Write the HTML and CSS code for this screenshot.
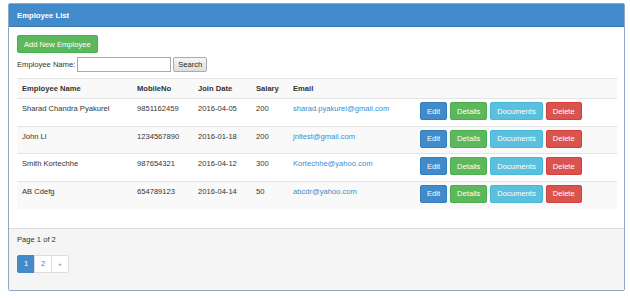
FILE: index.html
```html
<!DOCTYPE html>
<html>

<head>
  <meta charset="UTF-8">
  <title>Employee List</title>
  <link rel="stylesheet" href="styles.css">
</head>

<body>
  <div class="panel">
    <div class="panel-heading">Employee List</div>
    <div class="panel-body">
      <button class="btn btn-success add">Add New Employee</button>
      <div class="search">
        <label for="name">Employee Name:</label>
        <input id="name" type="text" />
        <button class="search-btn">Search</button>
      </div>
      <table class="grid">
        <colgroup>
          <col style="width:115px">
          <col style="width:61px">
          <col style="width:58px">
          <col style="width:37px">
          <col style="width:127px">
          <col>
        </colgroup>
        <tbody>
          <tr>
            <th>Employee Name</th>
            <th>MobileNo</th>
            <th>Join Date</th>
            <th>Salary</th>
            <th>Email</th>
            <th></th>
          </tr>
          <tr>
            <td>Sharad Chandra Pyakurel</td>
            <td>9851162459</td>
            <td>2016-04-05</td>
            <td>200</td>
            <td><a href="#">sharad.pyakurel@gmail.com</a></td>
            <td class="actions">
              <button class="btn btn-primary">Edit</button>
              <button class="btn btn-success">Details</button>
              <button class="btn btn-info">Documents</button>
              <button class="btn btn-danger">Delete</button>
            </td>
          </tr>
          <tr>
            <td>John Li</td>
            <td>1234567890</td>
            <td>2016-01-18</td>
            <td>200</td>
            <td><a href="#">jnltest@gmail.com</a></td>
            <td class="actions">
              <button class="btn btn-primary">Edit</button>
              <button class="btn btn-success">Details</button>
              <button class="btn btn-info">Documents</button>
              <button class="btn btn-danger">Delete</button>
            </td>
          </tr>
          <tr>
            <td>Smith Kortechhe</td>
            <td>987654321</td>
            <td>2016-04-12</td>
            <td>300</td>
            <td><a href="#">Kortechhe@yahoo.com</a></td>
            <td class="actions">
              <button class="btn btn-primary">Edit</button>
              <button class="btn btn-success">Details</button>
              <button class="btn btn-info">Documents</button>
              <button class="btn btn-danger">Delete</button>
            </td>
          </tr>
          <tr>
            <td>AB Cdefg</td>
            <td>654789123</td>
            <td>2016-04-14</td>
            <td>50</td>
            <td><a href="#">abcdr@yahoo.com</a></td>
            <td class="actions">
              <button class="btn btn-primary">Edit</button>
              <button class="btn btn-success">Details</button>
              <button class="btn btn-info">Documents</button>
              <button class="btn btn-danger">Delete</button>
            </td>
          </tr>
        </tbody>
      </table>
    </div>
    <div class="panel-footer">
      <p>Page 1 of 2</p>
      <ul class="pagination">
        <li class="active"><a href="#">1</a></li>
        <li><a href="#">2</a></li>
        <li><a href="#">&raquo;</a></li>
      </ul>
    </div>
  </div>
</body>

</html>
```

FILE: styles.css
```css
* {
  padding: 0;
  margin: 0;
  box-sizing: border-box;
}

body {
  background: #fff;
  font-family: "Liberation Sans", Arial, sans-serif;
  font-size: 7.6px;
  line-height: 11px;
  color: #333;
}

.panel {
  margin: 3px 5px 0 8px;
  height: 288px;
  border: 1px solid #8fa8c2;
  border-radius: 2px;
  display: flex;
  flex-direction: column;
  box-shadow: 0 1px 1px rgba(0, 0, 0, .05);
}

.panel-heading {
  height: 23px;
  background: #428bca;
  color: #fff;
  font-weight: bold;
  font-size: 7.7px;
  padding: 6px 8px;
  border-bottom: 1px solid #3a7bb4;
}

.panel-body {
  padding: 8px 8px 0 8px;
  height: 201px;
  display: flex;
  flex-direction: column;
  align-items: flex-start;
}

.btn {
  height: 18px;
  padding: 0 6px;
  font-family: inherit;
  font-size: 7.6px;
  color: #fff;
  border: 1px solid transparent;
  border-radius: 2px;
}

.btn-primary {
  background: #428bca;
  border-color: #357ebd;
}

.btn-success {
  background: #5cb85c;
  border-color: #4cae4c;
}

.btn-info {
  background: #5bc0de;
  border-color: #46b8da;
}

.btn-danger {
  background: #d9534f;
  border-color: #d43f3a;
}

.search {
  margin-top: 4px;
  display: flex;
  align-items: center;
  gap: 2px;
}

.search input {
  width: 94px;
  height: 15px;
  border: 1px solid #a9a9a9;
  outline: none;
}

.search-btn {
  height: 15px;
  padding: 0 4px;
  font-family: inherit;
  font-size: 7.6px;
  color: #222;
  background: linear-gradient(#f6f6f6, #dedede);
  border: 1px solid #aaa;
  border-radius: 2px;
}

.grid {
  margin-top: 6px;
  width: 600px;
  border-collapse: collapse;
  table-layout: fixed;
}

.grid th,
.grid td {
  text-align: left;
  vertical-align: top;
  padding: 4px 5px 4px 5px;
  border-top: 1px solid #e4e4e4;
}

.grid th {
  font-weight: bold;
  height: 20px;
}

.grid td {
  height: 27.5px;
}

.grid tr:nth-child(odd) {
  background: #f9f9f9;
}

.grid a {
  color: #428bca;
  text-decoration: none;
}

.grid td.actions {
  padding: 3px 0 0 5px;
  white-space: nowrap;
  font-size: 0;
}

.actions .btn {
  margin-right: 3px;
}

.panel-footer {
  flex: 1;
  background: #f5f5f5;
  border-top: 1px solid #ddd;
  padding: 5px 8px;
}

.pagination {
  list-style: none;
  display: flex;
  margin-top: 10px;
}

.pagination a {
  display: block;
  width: 18px;
  height: 18px;
  line-height: 16px;
  text-align: center;
  color: #428bca;
  background: #fff;
  border: 1px solid #ddd;
  margin-left: -1px;
  text-decoration: none;
}

.pagination li:first-child a {
  margin-left: 0;
  border-radius: 2px 0 0 2px;
}

.pagination li:last-child a {
  border-radius: 0 2px 2px 0;
  font-size: 6px;
}

.pagination .active a {
  background: #428bca;
  border-color: #428bca;
  color: #fff;
}
```
